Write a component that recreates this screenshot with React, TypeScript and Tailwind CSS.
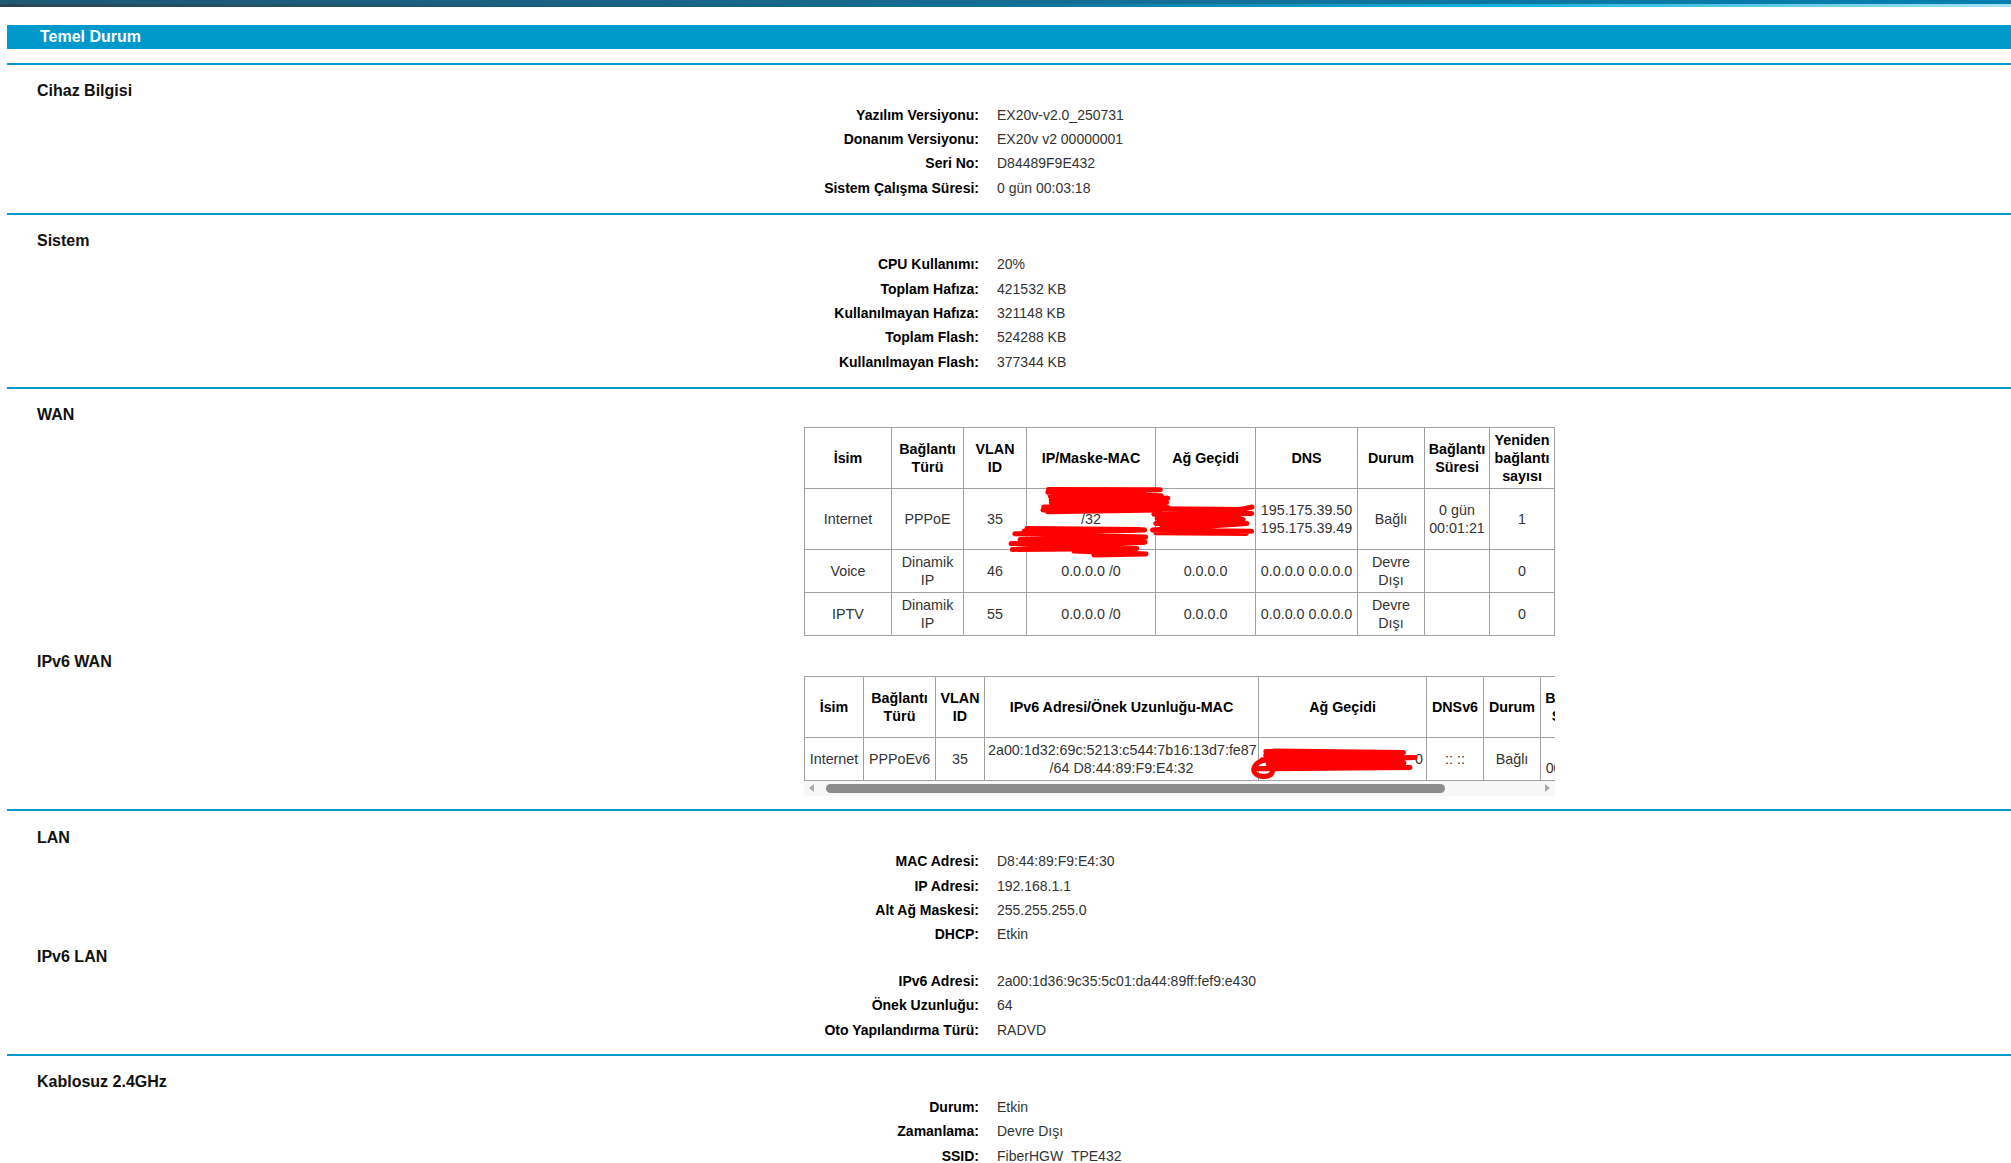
import React from 'react';

type Item = { label: string; value: string };

function scribble(x: number, y: number, w: number, h: number, passes: number, seed: number) {
  let s = seed;
  const rnd = () => {
    s = (s * 9301 + 49297) % 233280;
    return s / 233280;
  };
  let d = '';
  for (let i = 0; i <= passes; i++) {
    const yy = y + (h * i) / passes;
    const left = x + rnd() * w * 0.12;
    const right = x + w - rnd() * w * 0.12;
    const y1 = yy + (rnd() - 0.5) * 4;
    const y2 = yy + (rnd() - 0.5) * 5;
    d += `${i === 0 ? 'M' : ' L'}${left.toFixed(1)},${y1.toFixed(1)} L${right.toFixed(1)},${y2.toFixed(1)}`;
  }
  return d;
}

function InfoRows({ items }: { items: Item[] }) {
  return (
    <div className="ml-[797px]">
      {items.map((it) => (
        <div key={it.label} className="flex h-[24.4px] items-center">
          <div className="w-[175px] shrink-0 text-right font-bold text-black">{it.label}</div>
          <div className="pl-[18px] text-[#333]">{it.value}</div>
        </div>
      ))}
    </div>
  );
}

function Heading({ children }: { children: React.ReactNode }) {
  return <div className="h-5 pl-[30px] text-[16px] font-bold leading-5 text-[#111]">{children}</div>;
}

function Line() {
  return <div className="h-[2px] bg-[#0099cc]" />;
}

const th = 'border border-[#a0a0a0] px-[3px] py-[3px] font-bold text-black align-middle';
const td = 'border border-[#a0a0a0] px-[3px] py-[3px] text-[#333] align-middle';

function WanTable() {
  return (
    <div className="relative ml-[797px] mt-[2px] w-[751px]">
      <table className="w-[750px] table-fixed border-collapse text-center text-[14.3px] leading-[18px]">
        <colgroup>
          <col className="w-[87px]" />
          <col className="w-[72px]" />
          <col className="w-[63px]" />
          <col className="w-[129px]" />
          <col className="w-[100px]" />
          <col className="w-[102px]" />
          <col className="w-[67px]" />
          <col className="w-[65px]" />
          <col className="w-[65px]" />
        </colgroup>
        <thead>
          <tr>
            <th className={th}>İsim</th>
            <th className={th}>Bağlantı<br />Türü</th>
            <th className={th}>VLAN<br />ID</th>
            <th className={th}>IP/Maske-MAC</th>
            <th className={th}>Ağ Geçidi</th>
            <th className={th}>DNS</th>
            <th className={th}>Durum</th>
            <th className={th}>Bağlantı<br />Süresi</th>
            <th className={th}>Yeniden<br />bağlantı<br />sayısı</th>
          </tr>
        </thead>
        <tbody>
          <tr>
            <td className={td}>Internet</td>
            <td className={td}>PPPoE</td>
            <td className={td}>35</td>
            <td className={td}>
              &nbsp;<br />/32<br />&nbsp;
            </td>
            <td className={td}>&nbsp;</td>
            <td className={td}>195.175.39.50<br />195.175.39.49</td>
            <td className={td}>Bağlı</td>
            <td className={td}>0 gün<br />00:01:21</td>
            <td className={td}>1</td>
          </tr>
          <tr>
            <td className={td}>Voice</td>
            <td className={td}>Dinamik<br />IP</td>
            <td className={td}>46</td>
            <td className={td}>0.0.0.0 /0</td>
            <td className={td}>0.0.0.0</td>
            <td className={`${td} whitespace-nowrap`}>0.0.0.0 0.0.0.0</td>
            <td className={td}>Devre<br />Dışı</td>
            <td className={td}></td>
            <td className={td}>0</td>
          </tr>
          <tr>
            <td className={td}>IPTV</td>
            <td className={td}>Dinamik<br />IP</td>
            <td className={td}>55</td>
            <td className={td}>0.0.0.0 /0</td>
            <td className={td}>0.0.0.0</td>
            <td className={`${td} whitespace-nowrap`}>0.0.0.0 0.0.0.0</td>
            <td className={td}>Devre<br />Dışı</td>
            <td className={td}></td>
            <td className={td}>0</td>
          </tr>
        </tbody>
      </table>
      <svg className="pointer-events-none absolute left-0 top-0" width="751" height="208">
        <g fill="none" stroke="#ff0000" strokeWidth="5" strokeLinecap="round" strokeLinejoin="round">
          <path d={scribble(237, 64, 128, 20, 7, 7)} />
          <path d="M250,68 L300,63 L340,66" />
          <path d={scribble(207, 101, 138, 20, 6, 19)} />
          <path d="M270,124 L342,127 L290,128" />
          <path d={scribble(348, 83, 100, 22, 7, 31)} />
          <path d="M430,84 L448,80" />
        </g>
      </svg>
    </div>
  );
}

function Ipv6Table() {
  return (
    <div className="ml-[797px] mt-[4px] w-[751px]">
      <div className="relative w-[751px] overflow-hidden">
        <table className="w-[934px] table-fixed border-collapse text-center text-[14.3px] leading-[18px]">
          <colgroup>
            <col className="w-[59px]" />
            <col className="w-[72px]" />
            <col className="w-[49px]" />
            <col className="w-[274px]" />
            <col className="w-[168px]" />
            <col className="w-[57px]" />
            <col className="w-[57px]" />
            <col className="w-[66px]" />
            <col className="w-[132px]" />
          </colgroup>
          <thead>
            <tr>
              <th className={th}>İsim</th>
              <th className={th}>Bağlantı<br />Türü</th>
              <th className={th}>VLAN<br />ID</th>
              <th className={`${th} whitespace-nowrap`}>IPv6 Adresi/Önek Uzunluğu-MAC</th>
              <th className={th}>Ağ Geçidi</th>
              <th className={th}>DNSv6</th>
              <th className={th}>Durum</th>
              <th className={th}>Bağlantı<br />Süresi</th>
              <th className={th}>Yeniden<br />bağlantı<br />sayısı</th>
            </tr>
          </thead>
          <tbody>
            <tr>
              <td className={td}>Internet</td>
              <td className={td}>PPPoEv6</td>
              <td className={td}>35</td>
              <td className={`${td} whitespace-nowrap`}>
                2a00:1d32:69c:5213:c544:7b16:13d7:fe87<br />/64 D8:44:89:F9:E4:32
              </td>
              <td className={`${td} text-right`}>0</td>
              <td className={td}>:: ::</td>
              <td className={td}>Bağlı</td>
              <td className={td}>0 gün<br />00:01:21</td>
              <td className={td}>1</td>
            </tr>
          </tbody>
        </table>
        <svg className="pointer-events-none absolute left-0 top-0" width="751" height="104">
          <g fill="none" stroke="#ff0000" strokeWidth="5" strokeLinecap="round" strokeLinejoin="round">
            <path d={scribble(452, 74, 160, 18, 6, 43)} />
            <path d="M462,84 C448,86 446,98 456,100 C466,102 472,96 466,92" />
          </g>
        </svg>
      </div>
      <div className="flex h-[15px] items-center bg-[#f7f7f7] px-[5px]">
        <div className="h-0 w-0 border-y-[4px] border-r-[5px] border-y-transparent border-r-[#a8a8a8]" />
        <div className="ml-[12px] h-[9px] w-[619px] rounded-full bg-[#8c8c8c]" />
        <div className="ml-auto h-0 w-0 border-y-[4px] border-l-[5px] border-y-transparent border-l-[#a8a8a8]" />
      </div>
    </div>
  );
}

export default function App() {
  return (
    <div className="min-h-screen bg-white font-['Liberation_Sans',Arial,sans-serif] text-[14px] leading-normal">
      <div className="h-[4px] bg-gradient-to-r from-[#1d5874] to-[#0080b0]" />
      <div className="h-[3px] bg-[linear-gradient(to_right,#2b4654_0%,#0c729a_50%,#12b2dc_75%,#a6e3f3_100%)]" />

      <div className="pl-[7px]">
        <div className="mt-[18px] flex h-6 items-center bg-[#0099cc] pl-[33px] text-[16px] font-bold text-white">
          Temel Durum
        </div>
        <div className="mt-[14px]">
          <Line />
        </div>

        {/* Cihaz Bilgisi */}
        <div className="pb-[12px] pt-[16px]">
          <Heading>Cihaz Bilgisi</Heading>
          <div className="mt-[2px]">
            <InfoRows
              items={[
                { label: 'Yazılım Versiyonu:', value: 'EX20v-v2.0_250731' },
                { label: 'Donanım Versiyonu:', value: 'EX20v v2 00000001' },
                { label: 'Seri No:', value: 'D84489F9E432' },
                { label: 'Sistem Çalışma Süresi:', value: '0 gün 00:03:18' },
              ]}
            />
          </div>
        </div>
        <Line />

        {/* Sistem */}
        <div className="pb-[12px] pt-[16px]">
          <Heading>Sistem</Heading>
          <div className="mt-[2px]">
            <InfoRows
              items={[
                { label: 'CPU Kullanımı:', value: '20%' },
                { label: 'Toplam Hafıza:', value: '421532 KB' },
                { label: 'Kullanılmayan Hafıza:', value: '321148 KB' },
                { label: 'Toplam Flash:', value: '524288 KB' },
                { label: 'Kullanılmayan Flash:', value: '377344 KB' },
              ]}
            />
          </div>
        </div>
        <Line />

        {/* WAN */}
        <div className="pb-[13px] pt-[16px]">
          <Heading>WAN</Heading>
          <WanTable />
          <div className="mt-[16px]">
            <Heading>IPv6 WAN</Heading>
          </div>
          <Ipv6Table />
        </div>
        <Line />

        {/* LAN */}
        <div className="pb-[12px] pt-[17px]">
          <Heading>LAN</Heading>
          <div className="mt-[2px]">
            <InfoRows
              items={[
                { label: 'MAC Adresi:', value: 'D8:44:89:F9:E4:30' },
                { label: 'IP Adresi:', value: '192.168.1.1' },
                { label: 'Alt Ağ Maskesi:', value: '255.255.255.0' },
                { label: 'DHCP:', value: 'Etkin' },
              ]}
            />
          </div>
          <Heading>IPv6 LAN</Heading>
          <div className="mt-[2px]">
            <InfoRows
              items={[
                { label: 'IPv6 Adresi:', value: '2a00:1d36:9c35:5c01:da44:89ff:fef9:e430' },
                { label: 'Önek Uzunluğu:', value: '64' },
                { label: 'Oto Yapılandırma Türü:', value: 'RADVD' },
              ]}
            />
          </div>
        </div>
        <Line />

        {/* Kablosuz */}
        <div className="pb-[15px] pt-[16px]">
          <Heading>Kablosuz 2.4GHz</Heading>
          <div className="mt-[3px]">
            <InfoRows
              items={[
                { label: 'Durum:', value: 'Etkin' },
                { label: 'Zamanlama:', value: 'Devre Dışı' },
                { label: 'SSID:', value: 'FiberHGW_TPE432' },
              ]}
            />
          </div>
        </div>
      </div>
    </div>
  );
}
